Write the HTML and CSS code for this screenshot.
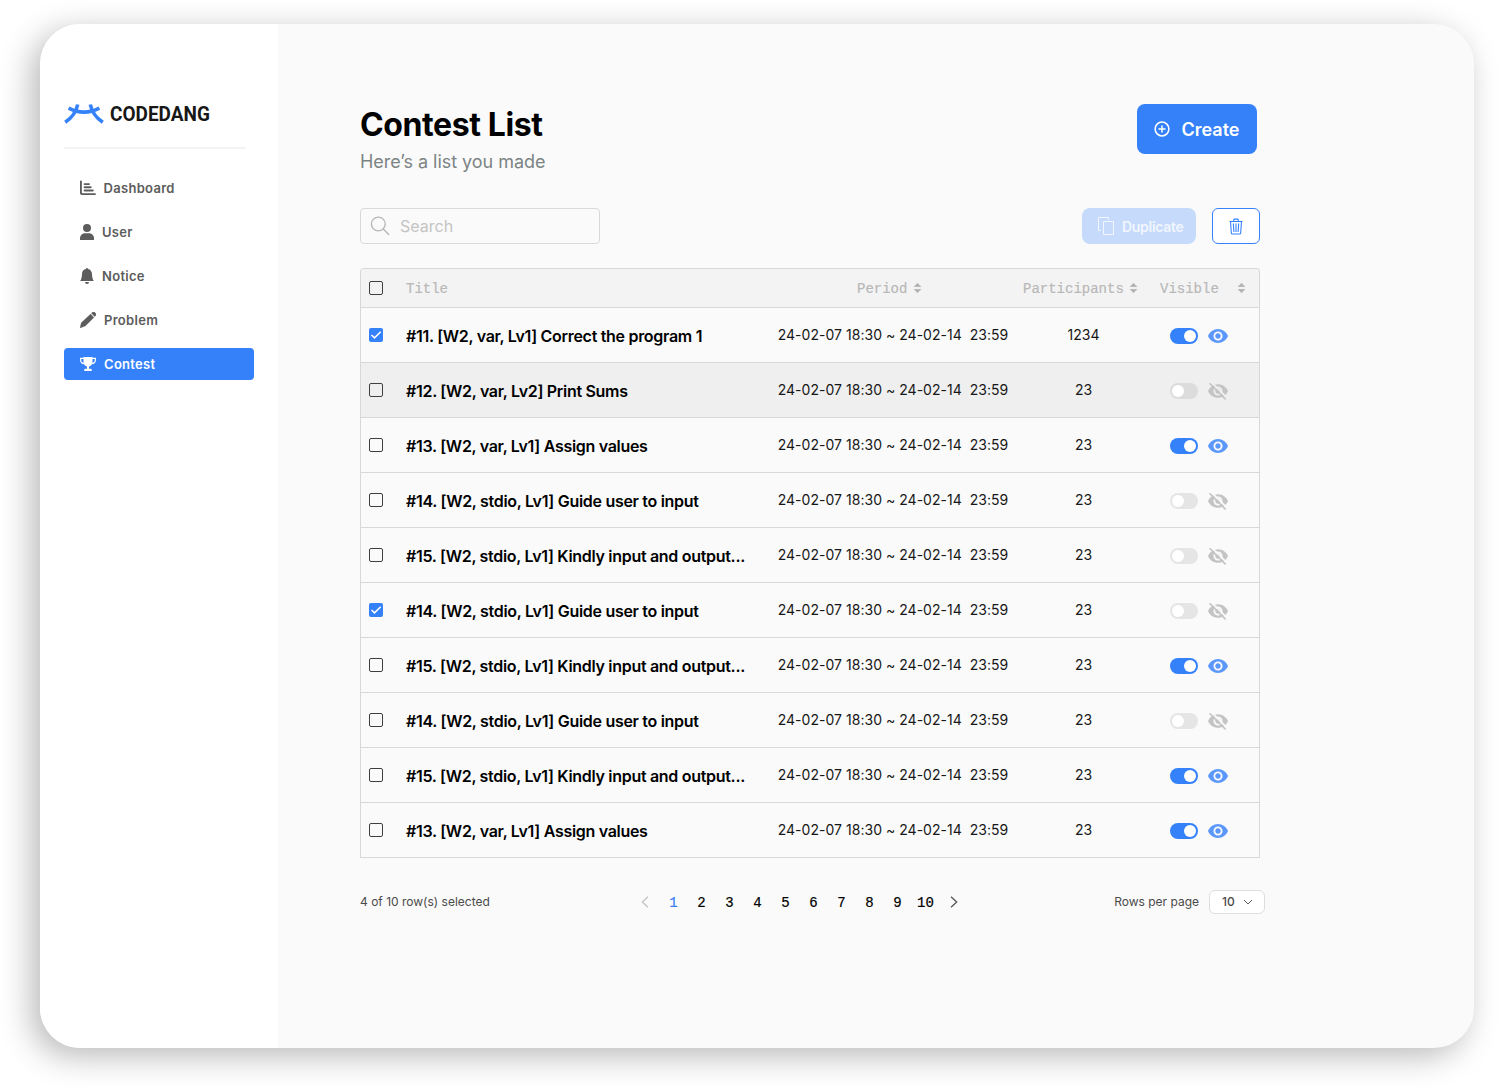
FILE: index.html
```html
<!DOCTYPE html>
<html lang="en">
<head>
<meta charset="utf-8">
<title>Codedang – Contest List</title>
<link rel="stylesheet" href="styles.css">
</head>
<body>
<svg class="sprite" aria-hidden="true">
  <symbol id="eye" viewBox="1 1 22 22"><path d="M12 4.3C7 4.3 2.73 7.500 1 12c1.73 4.500 6 7.700 11 7.700s9.270-3.200 11-7.700c-1.730-4.500-6-7.700-11-7.700zM12 17c-2.760 0-5-2.240-5-5s2.240-5 5-5 5 2.240 5 5-2.240 5-5 5zm0-8c-1.660 0-3 1.340-3 3s1.340 3 3 3 3-1.340 3-3-1.340-3-3-3z"/></symbol>
  <symbol id="eye-off" viewBox="1 1 22 22"><path d="M12 4.500C7 4.500 2.730 7.610 1 12c1.730 4.390 6 7.500 11 7.500s9.270-3.110 11-7.500c-1.730-4.390-6-7.500-11-7.500zM12 17c-2.760 0-5-2.240-5-5s2.240-5 5-5 5 2.240 5 5-2.240 5-5 5zm0-8c-1.660 0-3 1.340-3 3s1.340 3 3 3 3-1.340 3-3-1.340-3-3-3z"/><path class="slash-gap" d="M4.600 2.200 22 19.600"/><path class="slash" d="M2.700 3.500 20.400 21.200"/></symbol>
  <symbol id="sort" viewBox="0 0 9 12"><path d="M4.500 1.300 7.700 4.500H1.300zM4.500 10.700 1.300 7.500h6.400z" stroke-width=".8" stroke-linejoin="round"/></symbol>
</svg>
<div class="window">
  <aside class="sidebar">
    <div class="logo">
      <svg width="40" height="20" viewBox="0 0 40 20" fill="none" stroke="#3581FA" stroke-width="3.600"><path d="M4.600 4.100Q20 12.100 35.400 4.100"/><path d="M13.700.5Q11.500 11.500 1.200 18.200"/><path d="M26.300.5Q28.500 11.500 38.800 18.200"/></svg>
      <span class="logo-name">CODEDANG</span>
    </div>
    <nav class="nav">
      <a class="nav-item dash"><svg width="16" height="16" viewBox="0 0 16 16" fill="none" stroke="currentColor" stroke-width="1.900" stroke-linecap="round"><path d="M.9 1.500v11a1.600 1.600 0 0 0 1.600 1.600H15M4.600 4.100H9M4.600 7.300h6.100M4.600 10.500h8.200"/></svg>Dashboard</a>
      <a class="nav-item"><svg width="14" height="16" viewBox="1 0 14 16" fill="currentColor"><circle cx="8" cy="4" r="4"/><path d="M1 16v-1.500C1 11.500 3.300 9.300 6 9.300h4c2.700 0 5 2.200 5 5.200V16z"/></svg>User</a>
      <a class="nav-item"><svg width="14" height="16" viewBox="1 0 14 16" fill="currentColor"><path d="M8 16a2 2 0 0 0 2-2H6a2 2 0 0 0 2 2m.995-14.901a1 1 0 1 0-1.990 0A5 5 0 0 0 3 6c0 1.098-.5 6-2 7h14c-1.500-1-2-5.902-2-7 0-2.420-1.720-4.440-4.005-4.901"/></svg>Notice</a>
      <a class="nav-item"><svg width="16" height="16" viewBox="0 0 16 16" fill="currentColor"><path d="M10.600 2.100 13.900 5.400 5.300 14 0 16l1.300-5.300zM11.400 1.300l.5-.5a2.300 2.300 0 0 1 3.300 3.300l-.5.5z" stroke="currentColor" stroke-width=".3"/></svg>Problem</a>
      <a class="nav-item active"><svg width="16" height="16" viewBox="0 0 16 16" fill="currentColor"><path d="M3.500 1h9v.8H16v2.100c0 2.200-1.600 4.100-4.100 4.400-.7 1.100-1.700 2-2.900 2.300v2.200h1.300c.8 0 1.400.5 1.500 1.200V15H4.200v-1c.1-.7.7-1.200 1.500-1.200H7v-2.200C5.800 10.300 4.800 9.400 4.100 8.300 1.600 8 0 6.100 0 3.900V1.800h3.500zM3.500 3H1.200v.9c0 1.400.8 2.500 2.300 3zm9 0v3.900c1.500-.5 2.300-1.600 2.300-3V3z"/></svg>Contest</a>
    </nav>
  </aside>
  <main class="main">
    <header class="page-head">
      <div>
        <h1>Contest List</h1>
        <p class="subtitle">Here’s a list you made</p>
      </div>
      <button class="create"><svg width="16" height="16" viewBox="0 0 16 16" fill="none" stroke="currentColor" stroke-width="1.500" stroke-linecap="round"><circle cx="8" cy="8" r="6.900"/><path d="M8 5v6M5 8h6"/></svg><span>Create</span></button>
    </header>
    <div class="toolbar">
      <div class="search"><svg width="20" height="20" viewBox="0 0 20 20" fill="none" stroke="currentColor" stroke-width="1.400" stroke-linecap="round"><circle cx="8.300" cy="8" r="6.900"/><path d="m13.300 13 5.400 5.400"/></svg><span>Search</span></div>
      <div class="actions">
        <button class="duplicate"><svg width="18" height="20" viewBox="0 0 18 20" fill="none" stroke="currentColor" stroke-width="1"><path d="M4 14.500H1.500v-13h10V4M6.500 5.500h10v13h-10z"/></svg><span>Duplicate</span></button>
        <button class="trash" aria-label="Delete"><svg width="14" height="17" viewBox="0 0 14 17" fill="none" stroke="currentColor" stroke-width="1.100"><path d="M.5 3.500h13M4.700 3.500V2q0-.9.9-.9h2.800q.9 0 .9.900v1.500M1.500 3.500l.8 11.400q.1 1.100 1.200 1.100h7q1.100 0 1.200-1.100l.8-11.400M4.300 5.500l.6 8.500M7 5.500V14M9.700 5.500 9.100 14"/></svg></button>
      </div>
    </div>
    <section class="table">
      <div class="row head"><i class="check"></i><span>Title</span><span class="th-period">Period<svg class="sort"><use href="#sort"/></svg></span><span class="th-part">Participants<svg class="sort"><use href="#sort"/></svg></span><span class="th-vis">Visible<svg class="sort"><use href="#sort"/></svg></span></div>
      <div class="row"><i class="check on"><svg viewBox="0 0 14 14"><path d="m2.500 7 3 2.900L11.700 3.800"/></svg></i><b class="title">#11. [W2, var, Lv1] Correct the program 1</b><span class="period">24-02-07 18:30 ~ 24-02-14&nbsp; 23:59</span><span class="count">1234</span><span class="visible on"><i class="toggle"></i><svg class="eye"><use href="#eye"/></svg></span></div>
      <div class="row hover"><i class="check"></i><b class="title">#12. [W2, var, Lv2] Print Sums</b><span class="period">24-02-07 18:30 ~ 24-02-14&nbsp; 23:59</span><span class="count">23</span><span class="visible"><i class="toggle"></i><svg class="eye"><use href="#eye-off"/></svg></span></div>
      <div class="row"><i class="check"></i><b class="title">#13. [W2, var, Lv1] Assign values</b><span class="period">24-02-07 18:30 ~ 24-02-14&nbsp; 23:59</span><span class="count">23</span><span class="visible on"><i class="toggle"></i><svg class="eye"><use href="#eye"/></svg></span></div>
      <div class="row"><i class="check"></i><b class="title">#14. [W2, stdio, Lv1] Guide user to input</b><span class="period">24-02-07 18:30 ~ 24-02-14&nbsp; 23:59</span><span class="count">23</span><span class="visible"><i class="toggle"></i><svg class="eye"><use href="#eye-off"/></svg></span></div>
      <div class="row"><i class="check"></i><b class="title">#15. [W2, stdio, Lv1] Kindly input and output...</b><span class="period">24-02-07 18:30 ~ 24-02-14&nbsp; 23:59</span><span class="count">23</span><span class="visible"><i class="toggle"></i><svg class="eye"><use href="#eye-off"/></svg></span></div>
      <div class="row"><i class="check on"><svg viewBox="0 0 14 14"><path d="m2.500 7 3 2.900L11.700 3.800"/></svg></i><b class="title">#14. [W2, stdio, Lv1] Guide user to input</b><span class="period">24-02-07 18:30 ~ 24-02-14&nbsp; 23:59</span><span class="count">23</span><span class="visible"><i class="toggle"></i><svg class="eye"><use href="#eye-off"/></svg></span></div>
      <div class="row"><i class="check"></i><b class="title">#15. [W2, stdio, Lv1] Kindly input and output...</b><span class="period">24-02-07 18:30 ~ 24-02-14&nbsp; 23:59</span><span class="count">23</span><span class="visible on"><i class="toggle"></i><svg class="eye"><use href="#eye"/></svg></span></div>
      <div class="row"><i class="check"></i><b class="title">#14. [W2, stdio, Lv1] Guide user to input</b><span class="period">24-02-07 18:30 ~ 24-02-14&nbsp; 23:59</span><span class="count">23</span><span class="visible"><i class="toggle"></i><svg class="eye"><use href="#eye-off"/></svg></span></div>
      <div class="row"><i class="check"></i><b class="title">#15. [W2, stdio, Lv1] Kindly input and output...</b><span class="period">24-02-07 18:30 ~ 24-02-14&nbsp; 23:59</span><span class="count">23</span><span class="visible on"><i class="toggle"></i><svg class="eye"><use href="#eye"/></svg></span></div>
      <div class="row"><i class="check"></i><b class="title">#13. [W2, var, Lv1] Assign values</b><span class="period">24-02-07 18:30 ~ 24-02-14&nbsp; 23:59</span><span class="count">23</span><span class="visible on"><i class="toggle"></i><svg class="eye"><use href="#eye"/></svg></span></div>
    </section>
    <footer class="foot">
      <span class="selected">4 of 10 row(s) selected</span>
      <div class="pages">
        <svg class="arrow prev" viewBox="0 0 8 12"><path d="M7 .7 1.300 6 7 11.300"/></svg>
        <span class="current">1</span><span>2</span><span>3</span><span>4</span><span>5</span><span>6</span><span>7</span><span>8</span><span>9</span><span>10</span>
        <svg class="arrow next" viewBox="0 0 8 12"><path d="M1 .7 6.700 6 1 11.300"/></svg>
      </div>
      <div class="per-page"><span class="selected">Rows per page</span><div class="select"><span class="selected">10</span><svg width="10" height="6" viewBox="0 0 10 6"><path d="m1 1 4 4 4-4"/></svg></div></div>
    </footer>
  </main>
</div>
</body>
</html>
```
FILE: styles.css
```css
* { box-sizing: border-box; }
body { margin: 0; background: #fff; font-family: Inter, "Liberation Sans", sans-serif; color: #000; }
button { font-family: inherit; border: 0; padding: 0; }
.sprite { display: none; }
.window { display: flex; width: 1434px; height: 1024px; margin: 24px 24px 40px 40px; border-radius: 40px; background: #fafafa; overflow: hidden; box-shadow: -8px 8px 32px rgba(0, 0, 0, .28); }

.sidebar { width: 238px; flex: none; background: #fff; padding: 80px 24px 0; }
.logo { display: flex; width: 182px; height: 45px; align-items: flex-start; gap: 6px; border-bottom: 2px solid #f3f3f3; }
.logo svg { flex: none; }
.logo-name { font: 700 21px/21px Roboto, sans-serif; color: #171717; transform: scaleX(.905); transform-origin: left; }
.nav { display: flex; flex-direction: column; gap: 12px; margin-top: 23px; }
.nav-item { display: flex; align-items: center; gap: 8px; width: 190px; height: 32px; padding-left: 16px; border-radius: 4px; font-size: 13px; font-weight: 600; letter-spacing: .3px; color: #5c5c5c; }
.nav-item.dash { gap: 7.5px; }
.nav-item.active { background: #3581fa; color: #fff; }

.main { flex: 1; padding: 80px 0 0 82px; }
.page-head { display: flex; justify-content: space-between; width: 897px; height: 104px; }
h1 { margin: 0; padding-top: 1px; font-size: 32px; line-height: 40px; font-weight: 700; letter-spacing: -.4px; }
.subtitle { margin: 5px 0 0; font-size: 18px; line-height: 24px; letter-spacing: -.04px; color: #7c8484; }
.create { display: flex; align-items: center; width: 120px; height: 50px; padding-left: 16.5px; gap: 12px; border-radius: 8px; background: #3581fa; color: #fff; font-size: 18px; font-weight: 600; }
.toolbar { display: flex; justify-content: space-between; width: 900px; height: 36px; }
.search { display: flex; align-items: center; gap: 10px; width: 240px; padding-left: 9px; border: 1px solid #d9d9d9; border-radius: 4px; font-size: 16px; color: #c4c4c4; }
.search svg { color: #b8b8b8; }
.actions { display: flex; gap: 16px; }
.duplicate { display: flex; align-items: center; gap: 7px; width: 114px; padding-left: 15px; border-radius: 8px; background: #c6dafc; color: #f1f6fe; font-size: 14px; font-weight: 600; letter-spacing: -.3px; }
.trash { display: flex; align-items: center; justify-content: center; width: 48px; border: 1px solid #3581fa; border-radius: 6px; background: #fff; color: #3581fa; }

.table { width: 900px; margin-top: 24px; border: 1px solid #d8d8d8; border-bottom: 0; border-radius: 4px 4px 0 0; overflow: hidden; }
.row { display: grid; grid-template-columns: 37px 362px 250px 131px 1fr; align-items: center; height: 55px; padding-left: 8px; border-bottom: 1px solid #d8d8d8; }
.row.head { height: 39px; background: #f3f3f3; color: #b8b8b8; font: 14px "Liberation Mono", monospace; -webkit-text-stroke: .2px #b8b8b8; }
.row.hover { background: #efefef; }
.check { display: block; width: 14px; height: 14px; border: 1px solid #3f3f3f; border-radius: 2px; }
.check.on { border: 0; background: #3581fa; }
.check svg { display: block; fill: none; stroke: #fff; stroke-width: 1.5; }
.head > span { display: flex; align-items: center; padding-top: 2px; }
.sort { width: 9px; height: 12px; margin-top: -2px; fill: #b3b3b3; stroke: #b3b3b3; }
.head .th-period { gap: 6px; padding-left: 89px; }
.head .th-part { gap: 5px; padding-left: 5px; }
.head .th-vis { gap: 18px; padding-left: 11px; }
.title { padding-top: 2px; font-size: 16px; font-weight: 600; letter-spacing: -.3px; white-space: nowrap; }
.period, .count { padding-bottom: 1px; font-size: 14px; color: #171717; text-align: center; white-space: nowrap; }
.period { letter-spacing: .03px; }
.visible { display: flex; align-items: center; gap: 10px; padding: 1px 0 0 21px; }
.toggle { width: 28px; height: 16px; padding: 2px; border-radius: 8px; background: #e5e5e5; }
.toggle::before { content: ""; display: block; width: 12px; height: 12px; border-radius: 50%; background: #fff; }
.hover .toggle { background: #dcdcdc; }
.on .toggle { background: #3581fa; padding-left: 14px; }
.eye { width: 20px; height: 20px; fill: #c4c4c4; color: #fafafa; }
.on .eye { fill: #5c98fb; }
.hover .eye { color: #efefef; }
.slash-gap { stroke: currentColor; stroke-width: 2; }
.slash { stroke: #c4c4c4; stroke-width: 1.8; }

.foot { display: grid; grid-template-columns: 280.5px 1fr auto; align-items: center; width: 905px; height: 24px; margin-top: 32px; font-size: 12px; color: #4a4a4a; }
.selected { padding-bottom: 1px; }
.pages { display: flex; align-items: center; color: #000; font: 14px "Liberation Mono", monospace; -webkit-text-stroke: .2px; }
.pages span { width: 28px; padding-top: 2px; text-align: center; }
.pages .current { color: #3581fa; }
.arrow { width: 8px; height: 12px; fill: none; stroke-width: 1.3; }
.prev { stroke: #c4c4c4; margin-right: 11px; }
.next { stroke: #555; margin-left: 10px; }
.per-page { display: flex; align-items: center; gap: 10px; }
.select { display: flex; align-items: center; gap: 8px; width: 56px; height: 24px; padding-left: 12px; border: 1px solid #dedede; border-radius: 6px; background: #fff; font-weight: 500; }
.select svg { fill: none; stroke: #666; }
```
